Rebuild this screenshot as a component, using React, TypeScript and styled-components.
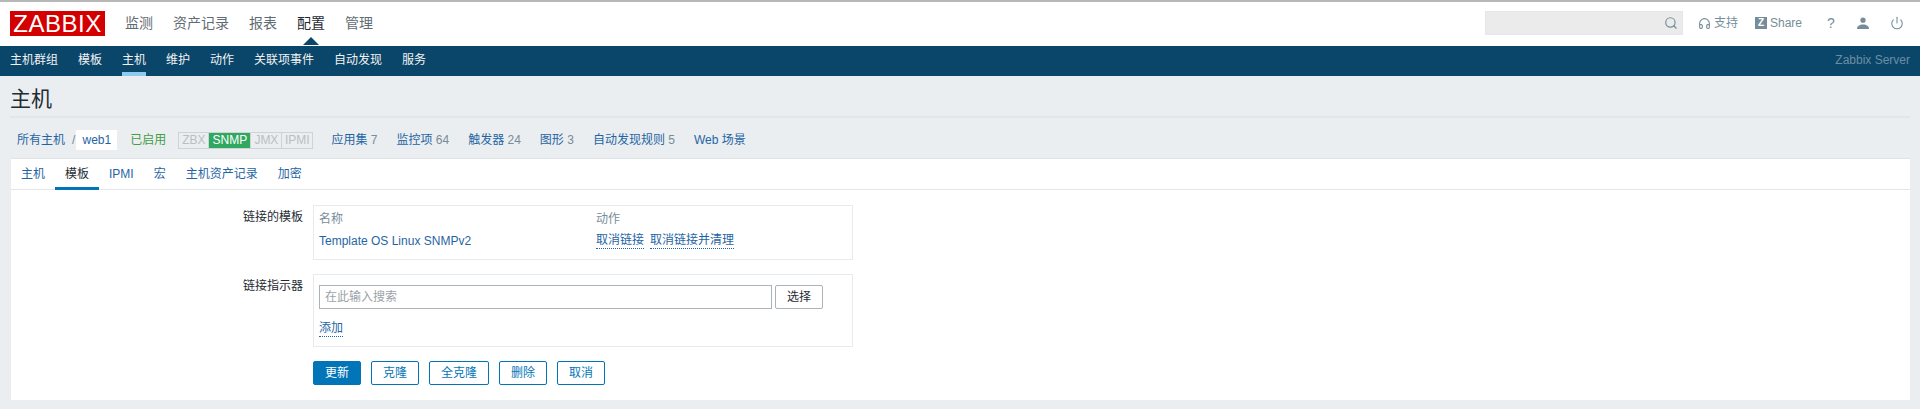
import React from "react"
import styled, { createGlobalStyle } from "styled-components"
import { Search, Headphones, Power } from "lucide-react"

const GlobalStyle = createGlobalStyle`
  html, body {
    margin: 0;
    padding: 0;
    background: #ebeef0;
  }
  body {
    font-family: "Liberation Sans", "Noto Sans CJK SC", sans-serif;
    font-size: 12px;
    line-height: 14px;
    color: #1f2c33;
  }
  * {
    box-sizing: border-box;
  }
`

const Page = styled.div`
  height: 409px;
  overflow: hidden;
`

const TopNav = styled.header`
  height: 46px;
  background: #fff;
  border-top: 2px solid #b8b8b8;
  display: flex;
  align-items: center;
  padding: 0 16px 2px 10px;
`

const Logo = styled.div`
  width: 95px;
  height: 25px;
  background: #d40000;
  color: #fff;
  font-size: 24px;
  line-height: 25px;
  text-align: center;
  letter-spacing: 0.5px;
  margin-right: 20px;
  flex: none;
`

const MainMenu = styled.nav`
  display: flex;
  gap: 20px;
  flex: 1;
`

const MainItem = styled.span<{ $active?: boolean }>`
  position: relative;
  font-size: 14px;
  line-height: 18px;
  color: ${(props) => (props.$active ? "#1f2c33" : "#5f6c73")};
  ${(props) =>
    props.$active &&
    `
    &:after {
      content: "";
      position: absolute;
      left: 50%;
      bottom: -13px;
      margin-left: -8px;
      border: 8px solid transparent;
      border-top: 0;
      border-bottom-color: #0a466a;
    }
  `}
`

const Tools = styled.div`
  display: flex;
  align-items: center;
  color: #768d99;
`

const SearchBox = styled.div`
  width: 198px;
  height: 24px;
  background: #ebebeb;
  border: 1px solid #e6e6e6;
  display: flex;
  align-items: center;
  justify-content: flex-end;
  padding-right: 4px;
  color: #768d99;
  margin-right: 15px;
`

const ToolLink = styled.span<{ $width: number; $large?: boolean }>`
  width: ${(props) => props.$width}px;
  display: flex;
  align-items: center;
  gap: 3px;
  color: #768d99;
  font-size: ${(props) => (props.$large ? 14 : 12)}px;
`

const ZMark = styled.span`
  width: 12px;
  height: 12px;
  background: #768d99;
  color: #fff;
  font-size: 10px;
  font-weight: bold;
  line-height: 12px;
  text-align: center;
`

const SubNav = styled.nav`
  height: 30px;
  background: #0a466a;
  display: flex;
  align-items: stretch;
  justify-content: space-between;
  padding: 0 10px;
`

const SubMenu = styled.div`
  display: flex;
  gap: 20px;
`

const SubItem = styled.span<{ $active?: boolean }>`
  color: #f2f2f2;
  line-height: 28px;
  border-bottom: 4px solid ${(props) => (props.$active ? "#8ccbee" : "transparent")};
`

const ServerName = styled.span`
  color: #6c8ea3;
  line-height: 29px;
  font-size: 12px;
`

const Content = styled.main`
  padding: 0 10px;
`

const TitleRow = styled.div`
  height: 42px;
  border-bottom: 2px solid #e3e6e8;
  display: flex;
  align-items: center;
  padding-top: 6px;
`

const Title = styled.h1`
  margin: 0;
  font-size: 21px;
  line-height: 26px;
  font-weight: normal;
  color: #1f2c33;
`

const HostBar = styled.div`
  height: 40px;
  display: flex;
  align-items: center;
  padding: 4px 0 0 7px;
`

const Crumb = styled.a`
  color: #1f65a3;
`

const Slash = styled.span`
  color: #768d99;
  margin: 0 1px 0 7px;
`

const CurrentHost = styled.span`
  background: #fff;
  color: #1f65a3;
  width: 41px;
  height: 20px;
  line-height: 20px;
  text-align: center;
  margin-right: 13px;
`

const Enabled = styled.span`
  color: #429e47;
  margin-right: 12px;
`

const Availability = styled.div`
  display: flex;
  height: 17px;
  margin-right: 18px;
  border: 1px solid #cfd3d6;
`

const AvailabilityItem = styled.span<{ $on?: boolean; $width: number }>`
  width: ${(props) => props.$width}px;
  text-align: center;
  line-height: 15px;
  font-size: 12px;
  color: ${(props) => (props.$on ? "#fff" : "#b9bec2")};
  background: ${(props) => (props.$on ? "#2fa860" : "transparent")};
  & + & {
    border-left: 1px solid #cfd3d6;
  }
`

const HostLinks = styled.div`
  display: flex;
  gap: 19px;
`

const HostLink = styled.span`
  color: #1f65a3;
`

const Count = styled.span`
  color: #768d99;
`

const Card = styled.section`
  background: #fff;
  height: 242px;
  margin-left: 1px;
  border-top: 1px solid #dfe4e7;
`

const Tabs = styled.div`
  display: flex;
  height: 31px;
  border-bottom: 1px solid #e3e6e8;
`

const Tab = styled.span<{ $active?: boolean }>`
  padding: 0 10px;
  line-height: 31px;
  height: 31px;
  color: ${(props) => (props.$active ? "#1f2c33" : "#1f65a3")};
  border-bottom: 3px solid ${(props) => (props.$active ? "#0275b8" : "transparent")};
`

const Form = styled.div`
  padding-top: 15px;
  display: flex;
  flex-direction: column;
  gap: 14px;
`

const FormRow = styled.div`
  display: grid;
  grid-template-columns: 292px 540px;
  column-gap: 10px;
`

const Label = styled.label`
  text-align: right;
  padding-top: 5px;
  color: #1f2c33;
`

const Box = styled.div<{ $height: number }>`
  height: ${(props) => props.$height}px;
  border: 1px solid #e8ebed;
  padding: 6px 5px 5px;
`

const TemplateTable = styled.div`
  display: grid;
  grid-template-columns: 277px 1fr;
  row-gap: 6px;
`

const HeadCell = styled.span`
  color: #768d99;
  line-height: 15px;
`

const TemplateLink = styled.span`
  color: #1f65a3;
  line-height: 16px;
`

const Actions = styled.div`
  display: flex;
  gap: 6px;
`

const DotLink = styled.span`
  color: #1f65a3;
  line-height: 15px;
  border-bottom: 1px dotted #1f65a3;
`

const AddLink = styled(DotLink)`
  display: inline-block;
  margin-top: 12px;
`

const SearchRow = styled.div`
  display: flex;
  gap: 3px;
  padding-top: 4px;
`

const SearchInput = styled.div`
  width: 453px;
  height: 24px;
  border: 1px solid #acb3b8;
  padding-left: 5px;
  line-height: 22px;
  color: #9aa3a8;
`

const SelectButton = styled.span`
  width: 48px;
  height: 24px;
  border: 1px solid #acb3b8;
  border-radius: 2px;
  text-align: center;
  line-height: 22px;
  color: #1f2c33;
`

const ButtonRow = styled.div`
  display: flex;
  gap: 10px;
`

const Button = styled.span<{ $primary?: boolean; $width?: number }>`
  width: ${(props) => props.$width || 48}px;
  height: 24px;
  border: 1px solid #0275b8;
  border-radius: 2px;
  text-align: center;
  line-height: 22px;
  color: ${(props) => (props.$primary ? "#fff" : "#0275b8")};
  background: ${(props) => (props.$primary ? "#0275b8" : "#fff")};
`

const mainItems = ["监测", "资产记录", "报表", "配置", "管理"]
const subItems = ["主机群组", "模板", "主机", "维护", "动作", "关联项事件", "自动发现", "服务"]
const hostLinks: [string, string?][] = [
  ["应用集", "7"],
  ["监控项", "64"],
  ["触发器", "24"],
  ["图形", "3"],
  ["自动发现规则", "5"],
  ["Web 场景"],
]
const tabs = ["主机", "模板", "IPMI", "宏", "主机资产记录", "加密"]

const App = () => {
  return (
    <Page>
      <GlobalStyle />
      <TopNav>
        <Logo>ZABBIX</Logo>
        <MainMenu>
          {mainItems.map((item) => (
            <MainItem key={item} $active={item === "配置"}>
              {item}
            </MainItem>
          ))}
        </MainMenu>
        <Tools>
          <SearchBox>
            <Search size={14} strokeWidth={2} />
          </SearchBox>
          <ToolLink $width={57}>
            <Headphones size={13} strokeWidth={2} />
            支持
          </ToolLink>
          <ToolLink $width={72}>
            <ZMark>Z</ZMark>
            Share
          </ToolLink>
          <ToolLink $width={30} $large>
            ?
          </ToolLink>
          <ToolLink $width={33}>
            <svg width="12" height="12" viewBox="0 0 12 12" fill="#768d99">
              <circle cx="6" cy="3.2" r="2.6" />
              <path d="M0 12c0-3 2.500-4.500 6-4.500s6 1.500 6 4.500z" />
            </svg>
          </ToolLink>
          <ToolLink $width={14}>
            <Power size={14} strokeWidth={1.8} />
          </ToolLink>
        </Tools>
      </TopNav>
      <SubNav>
        <SubMenu>
          {subItems.map((item) => (
            <SubItem key={item} $active={item === "主机"}>
              {item}
            </SubItem>
          ))}
        </SubMenu>
        <ServerName>Zabbix Server</ServerName>
      </SubNav>
      <Content>
        <TitleRow>
          <Title>主机</Title>
        </TitleRow>
        <HostBar>
          <Crumb>所有主机</Crumb>
          <Slash>/</Slash>
          <CurrentHost>web1</CurrentHost>
          <Enabled>已启用</Enabled>
          <Availability>
            <AvailabilityItem $width={29}>ZBX</AvailabilityItem>
            <AvailabilityItem $width={42} $on>
              SNMP
            </AvailabilityItem>
            <AvailabilityItem $width={31}>JMX</AvailabilityItem>
            <AvailabilityItem $width={31}>IPMI</AvailabilityItem>
          </Availability>
          <HostLinks>
            {hostLinks.map(([name, count]) => (
              <HostLink key={name}>
                {name}
                {count && <Count> {count}</Count>}
              </HostLink>
            ))}
          </HostLinks>
        </HostBar>
        <Card>
          <Tabs>
            {tabs.map((tab) => (
              <Tab key={tab} $active={tab === "模板"}>
                {tab}
              </Tab>
            ))}
          </Tabs>
          <Form>
            <FormRow>
              <Label>链接的模板</Label>
              <Box $height={55}>
                <TemplateTable>
                  <HeadCell>名称</HeadCell>
                  <HeadCell>动作</HeadCell>
                  <TemplateLink>Template OS Linux SNMPv2</TemplateLink>
                  <Actions>
                    <DotLink>取消链接</DotLink>
                    <DotLink>取消链接并清理</DotLink>
                  </Actions>
                </TemplateTable>
              </Box>
            </FormRow>
            <FormRow>
              <Label>链接指示器</Label>
              <Box $height={73}>
                <SearchRow>
                  <SearchInput>在此输入搜索</SearchInput>
                  <SelectButton>选择</SelectButton>
                </SearchRow>
                <AddLink>添加</AddLink>
              </Box>
            </FormRow>
            <FormRow>
              <span />
              <ButtonRow>
                <Button $primary>更新</Button>
                <Button>克隆</Button>
                <Button $width={60}>全克隆</Button>
                <Button>删除</Button>
                <Button>取消</Button>
              </ButtonRow>
            </FormRow>
          </Form>
        </Card>
      </Content>
    </Page>
  )
}

export default App
